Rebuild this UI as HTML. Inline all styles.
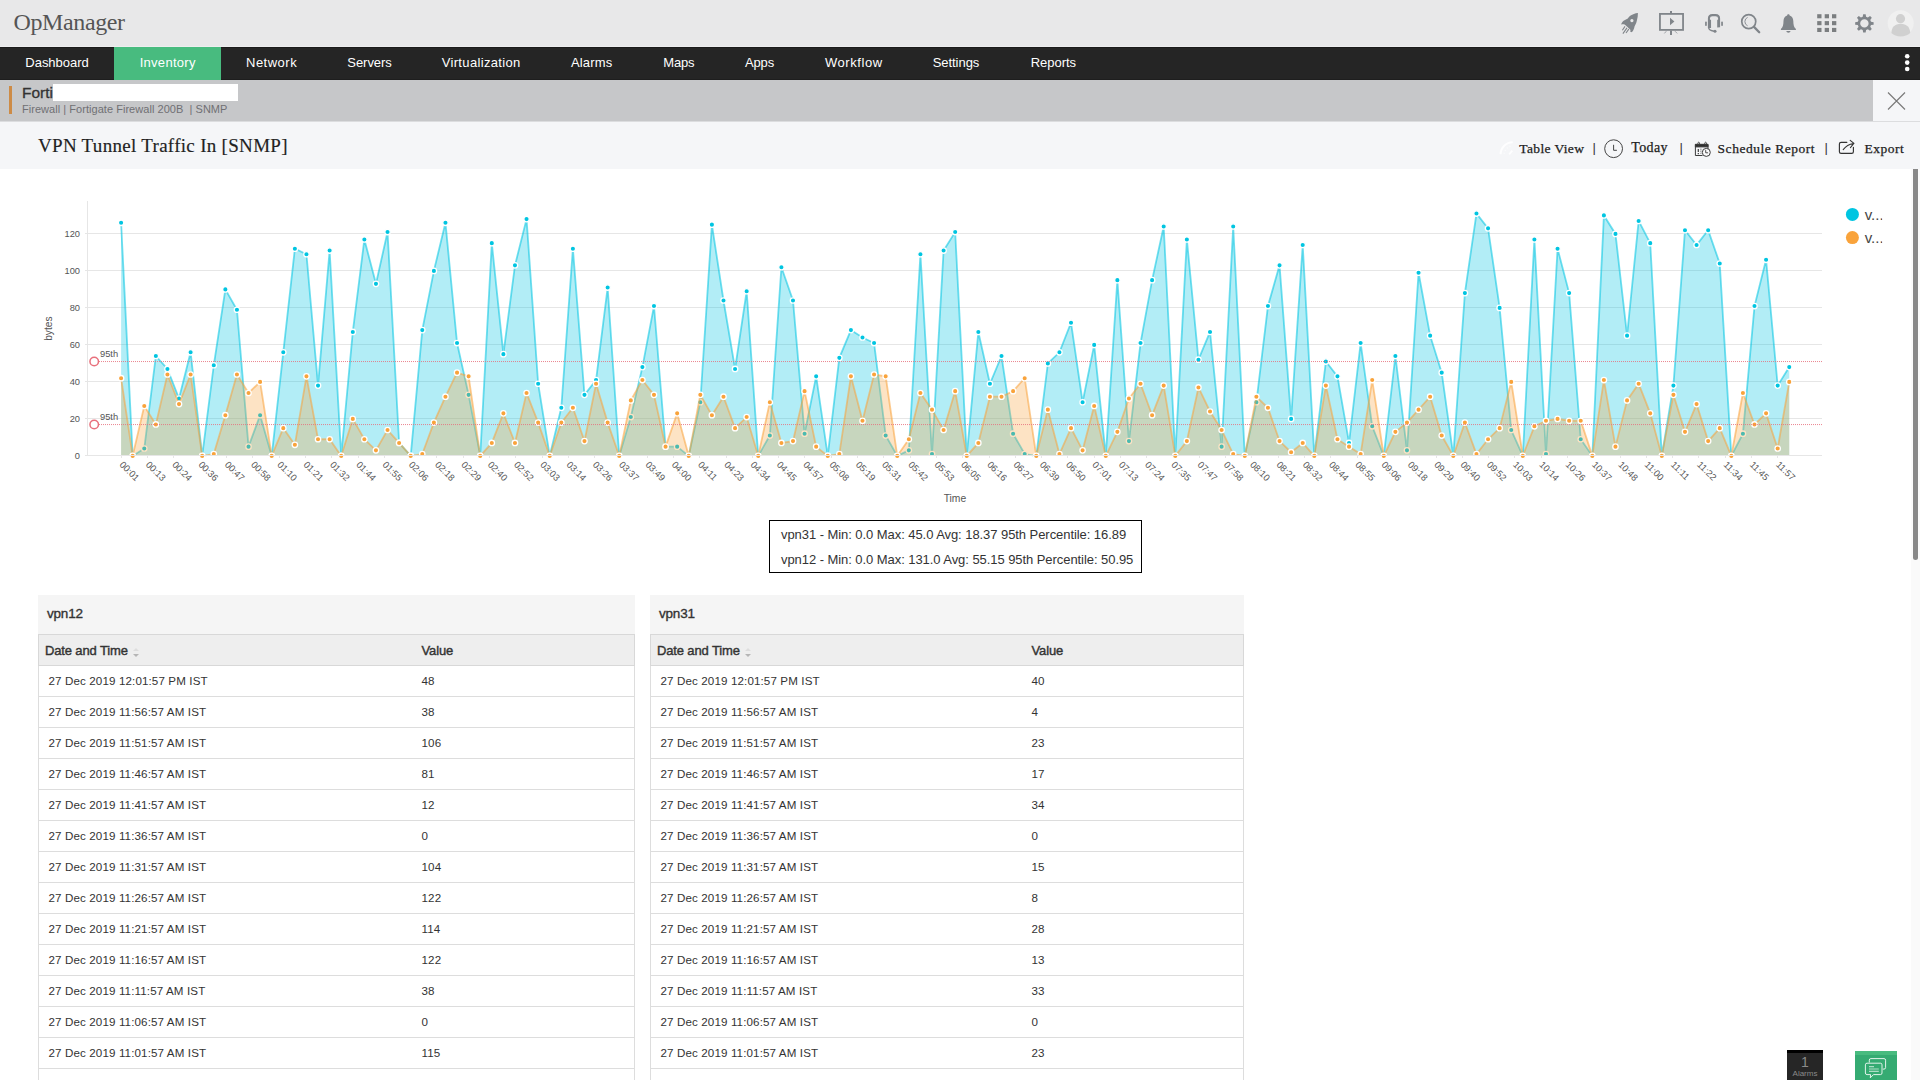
<!DOCTYPE html>
<html><head><meta charset="utf-8"><title>OpManager</title>
<style>
*{box-sizing:border-box}
html,body{margin:0;padding:0}
body{width:1920px;height:1080px;overflow:hidden;position:relative;background:#fff;font-family:"Liberation Sans",sans-serif;color:#333}
#top{position:absolute;left:0;top:0;width:1920px;height:47px;background:#e8e8e9;border-bottom:1px solid #eeeeef}
#logo{position:absolute;left:13.5px;top:8px;font-family:"Liberation Serif",serif;font-size:24px;color:#555;letter-spacing:-0.38px;line-height:28px;white-space:nowrap}
#nav{position:absolute;left:0;top:47px;width:1920px;height:33px;background:#252525;box-shadow:inset 0 1px 0 #1b1b1b, inset 0 -1px 0 #1e1e1e}
#nav .act{position:absolute;left:114px;top:0;width:107px;height:33px;background:#48bb7f}
#nav span{position:absolute;top:0;line-height:31px;font-size:13px;color:#fff;white-space:nowrap}
#dev{position:absolute;left:0;top:80px;width:1920px;height:42px;background:#c6c7c9;border-bottom:1px solid #dcdddf}
#dev .bar{position:absolute;left:9px;top:6px;width:3px;height:28px;background:#cd8b46}
#dev .nm{position:absolute;left:22px;top:4px;font-size:15.5px;-webkit-text-stroke:0.3px #333;color:#333;line-height:18px}
#dev .red{position:absolute;left:53px;top:4px;width:185px;height:17px;background:#fff}
#dev .sub{position:absolute;left:22px;top:22.5px;font-size:11px;color:#707074;letter-spacing:0.04px;line-height:13px;white-space:pre}
#dev .close{position:absolute;left:1873px;top:0;width:47px;height:41px;background:#f5f6f8}
#title{position:absolute;left:0;top:122px;width:1920px;height:47px;background:#f5f6f8}
#title h1{position:absolute;left:38px;top:12px;-webkit-text-stroke:0.15px #222;margin:0;font-family:"Liberation Serif",serif;font-weight:normal;font-size:19px;line-height:24px;color:#222;white-space:nowrap;letter-spacing:0.3px}
#title .act{position:absolute;top:0;font-family:"Liberation Serif",serif;font-size:13.5px;line-height:18px;color:#222;white-space:nowrap;-webkit-text-stroke:0.25px #222}
#stats{position:absolute;left:769px;top:520px;width:373px;height:53px;border:1px solid #000;font-size:13px;color:#333;white-space:nowrap;letter-spacing:-0.062px}
#stats div{position:absolute;left:11px;line-height:16px}
.tbl{position:absolute;top:595px;height:500px}
.tt{height:39px;background:#f5f5f5;position:relative}
.tt span{position:absolute;left:9px;top:10.5px;font-size:13.5px;-webkit-text-stroke:0.35px #333;line-height:16px;color:#333;letter-spacing:-0.2px}
.th{height:32px;background:#eee;border:1px solid #d8d8d8;position:relative}
.th span{position:absolute;top:8px;font-size:13px;-webkit-text-stroke:0.4px #333;line-height:16px;color:#333;white-space:nowrap;letter-spacing:-0.14px}
.th .c1{left:6px}
.sort{position:absolute;left:94px;top:13px;width:7px;height:10px}
.sort:before{content:"";position:absolute;left:0;top:0;border:3.5px solid transparent;border-bottom:3.5px solid #ddd;border-top:0}
.sort:after{content:"";position:absolute;left:0;top:5.5px;border:3.5px solid transparent;border-top:3.5px solid #b5b5b5;border-bottom:0}
.tb{border-left:1px solid #ddd;border-right:1px solid #ddd}
.tr{height:31px;border-bottom:1px solid #ddd;position:relative}
.tr span{position:absolute;top:8px;font-size:11.6px;line-height:14px;color:#333;white-space:nowrap;letter-spacing:0.12px}
.tr .c1{left:9.5px}
</style></head><body>
<div id="top"><div id="logo">OpManager</div><svg width="320" height="47" viewBox="1600 0 320 47" style="position:absolute;left:1600px;top:0">
<g transform="translate(1620,12)" fill="#80858a"><path fill-rule="evenodd" d="M17.94,1 C15,1.3 12.5,2.3 10.6,3.6 C9.5,4.4 8.6,5.4 7.8,6.4 L3.6,8.7 C2.4,9.7 1.5,11 1.1,12.4 C2.4,12.1 3.6,12.1 4.6,12.4 L6.4,13.9 L10.6,18 L10.1,19.6 L11.6,20.3 C12.5,19.6 13.1,18.9 13.4,18 C14,16.8 14.4,15.7 14.5,14.6 L15,13.6 C16,12 16.6,10.3 16.9,8.6 C17.6,6.1 17.94,3.5 17.94,1 Z M11.9,7 a1.6,1.6 0 1,0 0.01,0 Z"/><path d="M5,14.4L2.4,18.2M7,15.9L2.9,21.6M8.8,17.2L6,21" stroke="#80858a" stroke-width="1.1" fill="none"/></g>
<g transform="translate(1658,10)" fill="none" stroke="#80858a"><rect x="1.95" y="3.9" width="23.1" height="16" stroke-width="1.8"/><path d="M13,0.9V3.5M13,20.5V24.9" stroke-width="2"/><path d="M8.3,21.2L6.4,23.4M17,21.2L19.2,23.4" stroke-width="1" stroke-opacity="0.7"/><path d="M12,7.8V15.3L16.4,11.55Z" fill="#80858a" stroke="none"/></g>
<g transform="translate(1703,13)" fill="#80858a" stroke="none"><path d="M4.9,15V5.6Q4.9,1 9.4,1H12.6Q17.1,1 17.1,5.6V14.2L14.2,14.6V7.2L15.1,6.2V5.6Q15.1,3.3 12.6,3.3H9.4Q6.9,3.3 6.9,5.6V6.2L8.05,7.2V15Z"/><rect x="2.1" y="8.6" width="1.7" height="4.5" rx="0.8"/><rect x="18.2" y="8.6" width="1.7" height="4.5" rx="0.8"/><path d="M5.7,14.6C5.6,17 8,17.7 11,18.2" fill="none" stroke="#80858a" stroke-width="1.5"/><circle cx="12" cy="18.3" r="1.5"/></g>
<g fill="none" stroke="#80858a"><circle cx="1748.75" cy="21.6" r="7" stroke-width="1.7"/><path d="M1754,26.9L1759.2,32.2" stroke-width="2.3" stroke-linecap="round"/><path d="M1747.6,17.4A4.6,4.6 0 0,0 1747.6,25.8" stroke-width="0.9"/></g>
<g transform="translate(1780,13)" fill="#80858a"><path d="M8.4,1.2C9.3,1.2 9.8,1.8 9.6,2.5C12,3.1 13.2,5.2 13.3,8C13.4,11.5 13.8,14.2 15.9,16V17.1H0.9V16C3,14.2 3.4,11.5 3.5,8C3.6,5.2 4.8,3.1 7.2,2.5C7,1.8 7.5,1.2 8.4,1.2Z"/><path d="M6.3,18.1H10.5C10.3,19.2 9.5,19.8 8.4,19.8S6.5,19.2 6.3,18.1Z"/></g>
<g fill="#7b7e80"><rect x="1817.2" y="14.2" width="4.3" height="4.1"/><rect x="1824.7" y="14.2" width="4.3" height="4.1"/><rect x="1832.0" y="14.2" width="4.3" height="4.1"/><rect x="1817.2" y="21.1" width="4.3" height="4.1"/><rect x="1824.7" y="21.1" width="4.3" height="4.1"/><rect x="1832.0" y="21.1" width="4.3" height="4.1"/><rect x="1817.2" y="27.9" width="4.3" height="4.1"/><rect x="1824.7" y="27.9" width="4.3" height="4.1"/><rect x="1832.0" y="27.9" width="4.3" height="4.1"/></g>
<g transform="translate(1864.4,23.4)" fill="#80858a"><path fill-rule="evenodd" d="M-1.68,-6.59L-1.25,-9.22L1.25,-9.22L1.68,-6.59L3.47,-5.85L5.63,-7.40L7.40,-5.63L5.85,-3.47L6.59,-1.68L9.22,-1.25L9.22,1.25L6.59,1.68L5.85,3.47L7.40,5.63L5.63,7.40L3.47,5.85L1.68,6.59L1.25,9.22L-1.25,9.22L-1.68,6.59L-3.47,5.85L-5.63,7.40L-7.40,5.63L-5.85,3.47L-6.59,1.68L-9.22,1.25L-9.22,-1.25L-6.59,-1.68L-5.85,-3.47L-7.40,-5.63L-5.63,-7.40L-3.47,-5.85ZM4.20,0 a4.20,4.20 0 1,0 -8.40,0 a4.20,4.20 0 1,0 8.40,0Z"/></g>
<circle cx="1900.7" cy="23.3" r="13" fill="#f0f0f0"/><circle cx="1900.5" cy="18.7" r="4.6" fill="#d0d0d0"/><path d="M1891.4,33 C1891.4,27.5 1895,23.8 1900.7,23.8 S1910.2,27.5 1910.2,33 C1907.8,35.3 1904.5,36.4 1900.7,36.4 S1893.6,35.3 1891.4,33Z" fill="#d0d0d0"/>
</svg></div>
<div id="nav"><div class="act"></div><span style="left:25.3px;letter-spacing:-0.02px">Dashboard</span><span style="left:139.7px;letter-spacing:0.28px">Inventory</span><span style="left:246.0px;letter-spacing:0.50px">Network</span><span style="left:347.3px;letter-spacing:-0.05px">Servers</span><span style="left:441.7px;letter-spacing:0.34px">Virtualization</span><span style="left:571.0px;letter-spacing:0.14px">Alarms</span><span style="left:663.3px;letter-spacing:-0.20px">Maps</span><span style="left:745.0px;letter-spacing:-0.16px">Apps</span><span style="left:825.0px;letter-spacing:0.55px">Workflow</span><span style="left:932.7px;letter-spacing:-0.05px">Settings</span><span style="left:1030.7px;letter-spacing:-0.03px">Reports</span><svg width="20" height="33" style="position:absolute;left:1897px;top:0"><g fill="#fff"><circle cx="10.2" cy="9.2" r="2.3"/><circle cx="10.2" cy="15.6" r="2.3"/><circle cx="10.2" cy="22" r="2.3"/></g></svg></div>
<div id="dev"><div class="bar"></div><div class="nm">Forti</div><div class="red"></div><div class="sub">Firewall | Fortigate Firewall 200B  | SNMP</div><div class="close"><svg width="47" height="42"><path d="M15 12.5L32 29.5M32 12.5L15 29.5" stroke="#777" stroke-width="1.1" fill="none"/></svg></div></div>
<div id="title"><h1>VPN Tunnel Traffic In [SNMP]</h1><svg width="440" height="47" viewBox="1480 122 440 47" style="position:absolute;left:1480px;top:0">
<g fill="none" stroke="#fff" stroke-opacity="0.9"><path d="M1500.6,154.2A12.2,12.2 0 0,1 1512.7,142.2" stroke-width="2"/><path d="M1504.3,153.8A8.4,8.4 0 0,1 1512.6,145.9" stroke-width="1.6" stroke-dasharray="1.1,2" stroke-opacity="0.6"/><path d="M1509.2,154.4L1512.3,150.6" stroke-width="1.8"/></g>
<g fill="none" stroke="#444"><circle cx="1613.6" cy="148.7" r="8.9" stroke-width="1"/><path d="M1613.6,144.8V150.3H1616.9" stroke-width="1"/></g>
<g transform="translate(1694.5,141.5)" fill="none" stroke="#3c3c3c" stroke-width="1"><path d="M0.9,2.9H13.5V9M8,14H0.9V2.9"/><path d="M0.9,2.9H13.5V5.4H0.9Z" fill="#2e2e2e"/><ellipse cx="4.2" cy="2.4" rx="0.9" ry="1.7" stroke-width="0.9"/><ellipse cx="11.1" cy="2.4" rx="0.9" ry="1.7" stroke-width="0.9"/><path d="M3.8,7.6V10.6M3.8,11.6V12.8" stroke-width="1.2"/><path d="M6.4,7V13" stroke-width="1.1" stroke-opacity="0.55" stroke-dasharray="1.4,0.7"/><circle cx="11.8" cy="10.9" r="4" fill="#fbfbfc" stroke-width="1"/><path d="M11.2,8.6V11.3H13.6" stroke-width="0.9"/></g>
<g fill="none" stroke="#333" stroke-width="1.15" stroke-linecap="round"><path d="M1846.9,142.3H1841.1Q1839.4,142.3 1839.4,144V151.7Q1839.4,153.4 1841.1,153.4H1851.7Q1853.4,153.4 1853.4,151.7V147.3"/><path d="M1843.2,149.6C1845.5,146.5 1848,144.2 1853.4,143.4M1850.2,140.4L1853.9,143.4L1850.4,147.6" stroke-width="1.05"/></g>
</svg>
<span class="act" style="left:1519.3px;top:18px;letter-spacing:0.36px">Table View</span>
<span class="act" style="left:1592.5px;top:17px;font-family:'Liberation Sans',sans-serif;font-size:13px;-webkit-text-stroke:0;color:#333">|</span>
<span class="act" style="left:1631.2px;top:17px;font-size:14px;letter-spacing:0.4px">Today</span>
<span class="act" style="left:1679.5px;top:17px;font-family:'Liberation Sans',sans-serif;font-size:13px;-webkit-text-stroke:0;color:#333">|</span>
<span class="act" style="left:1717.6px;top:18px;letter-spacing:0.52px">Schedule Report</span>
<span class="act" style="left:1824.5px;top:17px;font-family:'Liberation Sans',sans-serif;font-size:13px;-webkit-text-stroke:0;color:#333">|</span>
<span class="act" style="left:1864.4px;top:18px;letter-spacing:0.52px">Export</span></div>
<svg id="chart" width="1900" height="345" viewBox="0 0 1900 345" style="position:absolute;left:0;top:169px" font-family="Liberation Sans, sans-serif" font-size="9.3"><g stroke="#e6e6e6" stroke-width="1" shape-rendering="crispEdges"><line x1="85" x2="1822" y1="286.5" y2="286.5"/><line x1="85" x2="1822" y1="249.5" y2="249.5"/><line x1="85" x2="1822" y1="212.5" y2="212.5"/><line x1="85" x2="1822" y1="175.5" y2="175.5"/><line x1="85" x2="1822" y1="138.5" y2="138.5"/><line x1="85" x2="1822" y1="101.5" y2="101.5"/><line x1="85" x2="1822" y1="64.5" y2="64.5"/><line x1="87.5" x2="87.5" y1="32" y2="286.5"/><line x1="121.5" x2="121.5" y1="286.5" y2="289.0"/><line x1="147.5" x2="147.5" y1="286.5" y2="289.0"/><line x1="173.5" x2="173.5" y1="286.5" y2="289.0"/><line x1="200.5" x2="200.5" y1="286.5" y2="289.0"/><line x1="226.5" x2="226.5" y1="286.5" y2="289.0"/><line x1="252.5" x2="252.5" y1="286.5" y2="289.0"/><line x1="279.5" x2="279.5" y1="286.5" y2="289.0"/><line x1="305.5" x2="305.5" y1="286.5" y2="289.0"/><line x1="331.5" x2="331.5" y1="286.5" y2="289.0"/><line x1="358.5" x2="358.5" y1="286.5" y2="289.0"/><line x1="384.5" x2="384.5" y1="286.5" y2="289.0"/><line x1="410.5" x2="410.5" y1="286.5" y2="289.0"/><line x1="436.5" x2="436.5" y1="286.5" y2="289.0"/><line x1="463.5" x2="463.5" y1="286.5" y2="289.0"/><line x1="489.5" x2="489.5" y1="286.5" y2="289.0"/><line x1="515.5" x2="515.5" y1="286.5" y2="289.0"/><line x1="542.5" x2="542.5" y1="286.5" y2="289.0"/><line x1="568.5" x2="568.5" y1="286.5" y2="289.0"/><line x1="594.5" x2="594.5" y1="286.5" y2="289.0"/><line x1="620.5" x2="620.5" y1="286.5" y2="289.0"/><line x1="647.5" x2="647.5" y1="286.5" y2="289.0"/><line x1="673.5" x2="673.5" y1="286.5" y2="289.0"/><line x1="699.5" x2="699.5" y1="286.5" y2="289.0"/><line x1="726.5" x2="726.5" y1="286.5" y2="289.0"/><line x1="752.5" x2="752.5" y1="286.5" y2="289.0"/><line x1="778.5" x2="778.5" y1="286.5" y2="289.0"/><line x1="804.5" x2="804.5" y1="286.5" y2="289.0"/><line x1="831.5" x2="831.5" y1="286.5" y2="289.0"/><line x1="857.5" x2="857.5" y1="286.5" y2="289.0"/><line x1="883.5" x2="883.5" y1="286.5" y2="289.0"/><line x1="910.5" x2="910.5" y1="286.5" y2="289.0"/><line x1="936.5" x2="936.5" y1="286.5" y2="289.0"/><line x1="962.5" x2="962.5" y1="286.5" y2="289.0"/><line x1="989.5" x2="989.5" y1="286.5" y2="289.0"/><line x1="1015.5" x2="1015.5" y1="286.5" y2="289.0"/><line x1="1041.5" x2="1041.5" y1="286.5" y2="289.0"/><line x1="1067.5" x2="1067.5" y1="286.5" y2="289.0"/><line x1="1094.5" x2="1094.5" y1="286.5" y2="289.0"/><line x1="1120.5" x2="1120.5" y1="286.5" y2="289.0"/><line x1="1146.5" x2="1146.5" y1="286.5" y2="289.0"/><line x1="1173.5" x2="1173.5" y1="286.5" y2="289.0"/><line x1="1199.5" x2="1199.5" y1="286.5" y2="289.0"/><line x1="1225.5" x2="1225.5" y1="286.5" y2="289.0"/><line x1="1251.5" x2="1251.5" y1="286.5" y2="289.0"/><line x1="1278.5" x2="1278.5" y1="286.5" y2="289.0"/><line x1="1304.5" x2="1304.5" y1="286.5" y2="289.0"/><line x1="1330.5" x2="1330.5" y1="286.5" y2="289.0"/><line x1="1357.5" x2="1357.5" y1="286.5" y2="289.0"/><line x1="1383.5" x2="1383.5" y1="286.5" y2="289.0"/><line x1="1409.5" x2="1409.5" y1="286.5" y2="289.0"/><line x1="1436.5" x2="1436.5" y1="286.5" y2="289.0"/><line x1="1462.5" x2="1462.5" y1="286.5" y2="289.0"/><line x1="1488.5" x2="1488.5" y1="286.5" y2="289.0"/><line x1="1514.5" x2="1514.5" y1="286.5" y2="289.0"/><line x1="1541.5" x2="1541.5" y1="286.5" y2="289.0"/><line x1="1567.5" x2="1567.5" y1="286.5" y2="289.0"/><line x1="1593.5" x2="1593.5" y1="286.5" y2="289.0"/><line x1="1620.5" x2="1620.5" y1="286.5" y2="289.0"/><line x1="1646.5" x2="1646.5" y1="286.5" y2="289.0"/><line x1="1672.5" x2="1672.5" y1="286.5" y2="289.0"/><line x1="1698.5" x2="1698.5" y1="286.5" y2="289.0"/><line x1="1725.5" x2="1725.5" y1="286.5" y2="289.0"/><line x1="1751.5" x2="1751.5" y1="286.5" y2="289.0"/><line x1="1777.5" x2="1777.5" y1="286.5" y2="289.0"/></g><g fill="#555" text-anchor="end"><text transform="translate(80,290.0) scale(1,1.06)">0</text><text transform="translate(80,253.0) scale(1,1.06)">20</text><text transform="translate(80,216.0) scale(1,1.06)">40</text><text transform="translate(80,179.0) scale(1,1.06)">60</text><text transform="translate(80,142.0) scale(1,1.06)">80</text><text transform="translate(80,105.0) scale(1,1.06)">100</text><text transform="translate(80,68.0) scale(1,1.06)">120</text></g><g class="s1"><path d="M121.10,53.80L132.68,286.90L144.27,279.50L155.85,187.00L167.44,199.95L179.02,229.55L190.61,183.30L202.19,286.90L213.78,196.25L225.36,120.40L236.94,140.75L248.53,277.65L260.11,246.20L271.70,286.90L283.28,183.30L294.87,79.70L306.45,85.25L318.03,216.60L329.62,81.55L341.20,286.90L352.79,162.95L364.37,70.45L375.96,114.85L387.54,63.05L399.12,273.95L410.71,286.90L422.29,161.10L433.88,101.90L445.46,53.80L457.05,174.05L468.63,225.85L480.22,286.90L491.80,74.15L503.38,185.15L514.97,96.35L526.55,50.10L538.14,214.75L549.72,286.90L561.31,238.80L572.89,79.70L584.48,225.85L596.06,211.05L607.64,118.55L619.23,286.90L630.81,248.05L642.40,198.10L653.98,137.05L665.57,277.65L677.15,277.65L688.73,286.90L700.32,233.25L711.90,55.65L723.49,131.50L735.07,199.95L746.66,122.25L758.24,286.90L769.83,266.55L781.41,98.20L792.99,131.50L804.58,264.70L816.16,207.35L827.75,286.90L839.33,188.85L850.92,161.10L862.50,168.50L874.08,174.05L885.67,266.55L897.25,286.90L908.84,281.35L920.42,85.25L932.01,285.05L943.59,81.55L955.18,63.05L966.76,286.90L978.34,162.95L989.93,214.75L1001.51,187.00L1013.10,264.70L1024.68,285.05L1036.27,286.90L1047.85,194.40L1059.43,183.30L1071.02,153.70L1082.60,233.25L1094.19,175.90L1105.77,286.90L1117.36,111.15L1128.94,272.10L1140.53,174.05L1152.11,111.15L1163.69,57.50L1175.28,286.90L1186.86,70.45L1198.45,190.70L1210.03,162.95L1221.62,277.65L1233.20,57.50L1244.78,286.90L1256.37,233.25L1267.95,137.05L1279.54,96.35L1291.12,249.90L1302.71,76.00L1314.29,286.90L1325.88,192.55L1337.46,207.35L1349.04,273.95L1360.63,174.05L1372.21,257.30L1383.80,286.90L1395.38,187.00L1406.97,281.35L1418.55,103.75L1430.13,166.65L1441.72,203.65L1453.30,286.90L1464.89,124.10L1476.47,44.55L1488.06,59.35L1499.64,138.90L1511.23,261.00L1522.81,286.90L1534.39,70.45L1545.98,285.05L1557.56,79.70L1569.15,124.10L1580.73,270.25L1592.32,286.90L1603.90,46.40L1615.48,64.90L1627.07,166.65L1638.65,51.95L1650.24,74.15L1661.82,286.90L1673.41,216.60L1684.99,61.20L1696.58,76.00L1708.16,61.20L1719.74,94.50L1731.33,286.90L1742.91,264.70L1754.50,137.05L1766.08,90.80L1777.67,216.60L1789.25,198.10" fill="none" stroke="#00c5e1" stroke-width="1.8" stroke-opacity="0.55" stroke-linejoin="miter"/><path d="M121.10,53.80L132.68,286.90L144.27,279.50L155.85,187.00L167.44,199.95L179.02,229.55L190.61,183.30L202.19,286.90L213.78,196.25L225.36,120.40L236.94,140.75L248.53,277.65L260.11,246.20L271.70,286.90L283.28,183.30L294.87,79.70L306.45,85.25L318.03,216.60L329.62,81.55L341.20,286.90L352.79,162.95L364.37,70.45L375.96,114.85L387.54,63.05L399.12,273.95L410.71,286.90L422.29,161.10L433.88,101.90L445.46,53.80L457.05,174.05L468.63,225.85L480.22,286.90L491.80,74.15L503.38,185.15L514.97,96.35L526.55,50.10L538.14,214.75L549.72,286.90L561.31,238.80L572.89,79.70L584.48,225.85L596.06,211.05L607.64,118.55L619.23,286.90L630.81,248.05L642.40,198.10L653.98,137.05L665.57,277.65L677.15,277.65L688.73,286.90L700.32,233.25L711.90,55.65L723.49,131.50L735.07,199.95L746.66,122.25L758.24,286.90L769.83,266.55L781.41,98.20L792.99,131.50L804.58,264.70L816.16,207.35L827.75,286.90L839.33,188.85L850.92,161.10L862.50,168.50L874.08,174.05L885.67,266.55L897.25,286.90L908.84,281.35L920.42,85.25L932.01,285.05L943.59,81.55L955.18,63.05L966.76,286.90L978.34,162.95L989.93,214.75L1001.51,187.00L1013.10,264.70L1024.68,285.05L1036.27,286.90L1047.85,194.40L1059.43,183.30L1071.02,153.70L1082.60,233.25L1094.19,175.90L1105.77,286.90L1117.36,111.15L1128.94,272.10L1140.53,174.05L1152.11,111.15L1163.69,57.50L1175.28,286.90L1186.86,70.45L1198.45,190.70L1210.03,162.95L1221.62,277.65L1233.20,57.50L1244.78,286.90L1256.37,233.25L1267.95,137.05L1279.54,96.35L1291.12,249.90L1302.71,76.00L1314.29,286.90L1325.88,192.55L1337.46,207.35L1349.04,273.95L1360.63,174.05L1372.21,257.30L1383.80,286.90L1395.38,187.00L1406.97,281.35L1418.55,103.75L1430.13,166.65L1441.72,203.65L1453.30,286.90L1464.89,124.10L1476.47,44.55L1488.06,59.35L1499.64,138.90L1511.23,261.00L1522.81,286.90L1534.39,70.45L1545.98,285.05L1557.56,79.70L1569.15,124.10L1580.73,270.25L1592.32,286.90L1603.90,46.40L1615.48,64.90L1627.07,166.65L1638.65,51.95L1650.24,74.15L1661.82,286.90L1673.41,216.60L1684.99,61.20L1696.58,76.00L1708.16,61.20L1719.74,94.50L1731.33,286.90L1742.91,264.70L1754.50,137.05L1766.08,90.80L1777.67,216.60L1789.25,198.10L1789.25,286.90L121.10,286.90Z" fill="#00c5e1" fill-opacity="0.3" stroke="none"/><g fill="#00c5e1" stroke="#fff" stroke-width="1.3"><circle cx="121.10" cy="53.80" r="2.7"/><circle cx="132.68" cy="286.90" r="2.7"/><circle cx="144.27" cy="279.50" r="2.7"/><circle cx="155.85" cy="187.00" r="2.7"/><circle cx="167.44" cy="199.95" r="2.7"/><circle cx="179.02" cy="229.55" r="2.7"/><circle cx="190.61" cy="183.30" r="2.7"/><circle cx="202.19" cy="286.90" r="2.7"/><circle cx="213.78" cy="196.25" r="2.7"/><circle cx="225.36" cy="120.40" r="2.7"/><circle cx="236.94" cy="140.75" r="2.7"/><circle cx="248.53" cy="277.65" r="2.7"/><circle cx="260.11" cy="246.20" r="2.7"/><circle cx="271.70" cy="286.90" r="2.7"/><circle cx="283.28" cy="183.30" r="2.7"/><circle cx="294.87" cy="79.70" r="2.7"/><circle cx="306.45" cy="85.25" r="2.7"/><circle cx="318.03" cy="216.60" r="2.7"/><circle cx="329.62" cy="81.55" r="2.7"/><circle cx="341.20" cy="286.90" r="2.7"/><circle cx="352.79" cy="162.95" r="2.7"/><circle cx="364.37" cy="70.45" r="2.7"/><circle cx="375.96" cy="114.85" r="2.7"/><circle cx="387.54" cy="63.05" r="2.7"/><circle cx="399.12" cy="273.95" r="2.7"/><circle cx="410.71" cy="286.90" r="2.7"/><circle cx="422.29" cy="161.10" r="2.7"/><circle cx="433.88" cy="101.90" r="2.7"/><circle cx="445.46" cy="53.80" r="2.7"/><circle cx="457.05" cy="174.05" r="2.7"/><circle cx="468.63" cy="225.85" r="2.7"/><circle cx="480.22" cy="286.90" r="2.7"/><circle cx="491.80" cy="74.15" r="2.7"/><circle cx="503.38" cy="185.15" r="2.7"/><circle cx="514.97" cy="96.35" r="2.7"/><circle cx="526.55" cy="50.10" r="2.7"/><circle cx="538.14" cy="214.75" r="2.7"/><circle cx="549.72" cy="286.90" r="2.7"/><circle cx="561.31" cy="238.80" r="2.7"/><circle cx="572.89" cy="79.70" r="2.7"/><circle cx="584.48" cy="225.85" r="2.7"/><circle cx="596.06" cy="211.05" r="2.7"/><circle cx="607.64" cy="118.55" r="2.7"/><circle cx="619.23" cy="286.90" r="2.7"/><circle cx="630.81" cy="248.05" r="2.7"/><circle cx="642.40" cy="198.10" r="2.7"/><circle cx="653.98" cy="137.05" r="2.7"/><circle cx="665.57" cy="277.65" r="2.7"/><circle cx="677.15" cy="277.65" r="2.7"/><circle cx="688.73" cy="286.90" r="2.7"/><circle cx="700.32" cy="233.25" r="2.7"/><circle cx="711.90" cy="55.65" r="2.7"/><circle cx="723.49" cy="131.50" r="2.7"/><circle cx="735.07" cy="199.95" r="2.7"/><circle cx="746.66" cy="122.25" r="2.7"/><circle cx="758.24" cy="286.90" r="2.7"/><circle cx="769.83" cy="266.55" r="2.7"/><circle cx="781.41" cy="98.20" r="2.7"/><circle cx="792.99" cy="131.50" r="2.7"/><circle cx="804.58" cy="264.70" r="2.7"/><circle cx="816.16" cy="207.35" r="2.7"/><circle cx="827.75" cy="286.90" r="2.7"/><circle cx="839.33" cy="188.85" r="2.7"/><circle cx="850.92" cy="161.10" r="2.7"/><circle cx="862.50" cy="168.50" r="2.7"/><circle cx="874.08" cy="174.05" r="2.7"/><circle cx="885.67" cy="266.55" r="2.7"/><circle cx="897.25" cy="286.90" r="2.7"/><circle cx="908.84" cy="281.35" r="2.7"/><circle cx="920.42" cy="85.25" r="2.7"/><circle cx="932.01" cy="285.05" r="2.7"/><circle cx="943.59" cy="81.55" r="2.7"/><circle cx="955.18" cy="63.05" r="2.7"/><circle cx="966.76" cy="286.90" r="2.7"/><circle cx="978.34" cy="162.95" r="2.7"/><circle cx="989.93" cy="214.75" r="2.7"/><circle cx="1001.51" cy="187.00" r="2.7"/><circle cx="1013.10" cy="264.70" r="2.7"/><circle cx="1024.68" cy="285.05" r="2.7"/><circle cx="1036.27" cy="286.90" r="2.7"/><circle cx="1047.85" cy="194.40" r="2.7"/><circle cx="1059.43" cy="183.30" r="2.7"/><circle cx="1071.02" cy="153.70" r="2.7"/><circle cx="1082.60" cy="233.25" r="2.7"/><circle cx="1094.19" cy="175.90" r="2.7"/><circle cx="1105.77" cy="286.90" r="2.7"/><circle cx="1117.36" cy="111.15" r="2.7"/><circle cx="1128.94" cy="272.10" r="2.7"/><circle cx="1140.53" cy="174.05" r="2.7"/><circle cx="1152.11" cy="111.15" r="2.7"/><circle cx="1163.69" cy="57.50" r="2.7"/><circle cx="1175.28" cy="286.90" r="2.7"/><circle cx="1186.86" cy="70.45" r="2.7"/><circle cx="1198.45" cy="190.70" r="2.7"/><circle cx="1210.03" cy="162.95" r="2.7"/><circle cx="1221.62" cy="277.65" r="2.7"/><circle cx="1233.20" cy="57.50" r="2.7"/><circle cx="1244.78" cy="286.90" r="2.7"/><circle cx="1256.37" cy="233.25" r="2.7"/><circle cx="1267.95" cy="137.05" r="2.7"/><circle cx="1279.54" cy="96.35" r="2.7"/><circle cx="1291.12" cy="249.90" r="2.7"/><circle cx="1302.71" cy="76.00" r="2.7"/><circle cx="1314.29" cy="286.90" r="2.7"/><circle cx="1325.88" cy="192.55" r="2.7"/><circle cx="1337.46" cy="207.35" r="2.7"/><circle cx="1349.04" cy="273.95" r="2.7"/><circle cx="1360.63" cy="174.05" r="2.7"/><circle cx="1372.21" cy="257.30" r="2.7"/><circle cx="1383.80" cy="286.90" r="2.7"/><circle cx="1395.38" cy="187.00" r="2.7"/><circle cx="1406.97" cy="281.35" r="2.7"/><circle cx="1418.55" cy="103.75" r="2.7"/><circle cx="1430.13" cy="166.65" r="2.7"/><circle cx="1441.72" cy="203.65" r="2.7"/><circle cx="1453.30" cy="286.90" r="2.7"/><circle cx="1464.89" cy="124.10" r="2.7"/><circle cx="1476.47" cy="44.55" r="2.7"/><circle cx="1488.06" cy="59.35" r="2.7"/><circle cx="1499.64" cy="138.90" r="2.7"/><circle cx="1511.23" cy="261.00" r="2.7"/><circle cx="1522.81" cy="286.90" r="2.7"/><circle cx="1534.39" cy="70.45" r="2.7"/><circle cx="1545.98" cy="285.05" r="2.7"/><circle cx="1557.56" cy="79.70" r="2.7"/><circle cx="1569.15" cy="124.10" r="2.7"/><circle cx="1580.73" cy="270.25" r="2.7"/><circle cx="1592.32" cy="286.90" r="2.7"/><circle cx="1603.90" cy="46.40" r="2.7"/><circle cx="1615.48" cy="64.90" r="2.7"/><circle cx="1627.07" cy="166.65" r="2.7"/><circle cx="1638.65" cy="51.95" r="2.7"/><circle cx="1650.24" cy="74.15" r="2.7"/><circle cx="1661.82" cy="286.90" r="2.7"/><circle cx="1673.41" cy="216.60" r="2.7"/><circle cx="1684.99" cy="61.20" r="2.7"/><circle cx="1696.58" cy="76.00" r="2.7"/><circle cx="1708.16" cy="61.20" r="2.7"/><circle cx="1719.74" cy="94.50" r="2.7"/><circle cx="1731.33" cy="286.90" r="2.7"/><circle cx="1742.91" cy="264.70" r="2.7"/><circle cx="1754.50" cy="137.05" r="2.7"/><circle cx="1766.08" cy="90.80" r="2.7"/><circle cx="1777.67" cy="216.60" r="2.7"/><circle cx="1789.25" cy="198.10" r="2.7"/></g></g><g class="s2"><path d="M121.10,209.20L132.68,286.90L144.27,236.95L155.85,255.45L167.44,205.50L179.02,235.10L190.61,205.50L202.19,286.90L213.78,285.05L225.36,246.20L236.94,205.50L248.53,224.00L260.11,212.90L271.70,286.90L283.28,259.15L294.87,275.80L306.45,207.35L318.03,270.25L329.62,270.25L341.20,286.90L352.79,249.90L364.37,270.25L375.96,281.35L387.54,261.00L399.12,273.95L410.71,286.90L422.29,285.05L433.88,253.60L445.46,227.70L457.05,203.65L468.63,207.35L480.22,286.90L491.80,273.95L503.38,244.35L514.97,273.95L526.55,224.00L538.14,253.60L549.72,286.90L561.31,253.60L572.89,238.80L584.48,272.10L596.06,214.75L607.64,253.60L619.23,286.90L630.81,231.40L642.40,211.05L653.98,225.85L665.57,277.65L677.15,244.35L688.73,286.90L700.32,225.85L711.90,246.20L723.49,227.70L735.07,259.15L746.66,248.05L758.24,286.90L769.83,233.25L781.41,273.95L792.99,272.10L804.58,222.15L816.16,277.65L827.75,286.90L839.33,285.05L850.92,207.35L862.50,251.75L874.08,205.50L885.67,207.35L897.25,286.90L908.84,270.25L920.42,224.00L932.01,240.65L943.59,261.00L955.18,222.15L966.76,286.90L978.34,273.95L989.93,227.70L1001.51,227.70L1013.10,222.15L1024.68,209.20L1036.27,286.90L1047.85,240.65L1059.43,285.05L1071.02,259.15L1082.60,281.35L1094.19,236.95L1105.77,286.90L1117.36,262.85L1128.94,229.55L1140.53,214.75L1152.11,246.20L1163.69,216.60L1175.28,286.90L1186.86,272.10L1198.45,218.45L1210.03,242.50L1221.62,261.00L1233.20,285.05L1244.78,286.90L1256.37,227.70L1267.95,238.80L1279.54,272.10L1291.12,283.20L1302.71,273.95L1314.29,286.90L1325.88,216.60L1337.46,270.25L1349.04,277.65L1360.63,285.05L1372.21,211.05L1383.80,286.90L1395.38,262.85L1406.97,253.60L1418.55,240.65L1430.13,227.70L1441.72,266.55L1453.30,286.90L1464.89,253.60L1476.47,285.05L1488.06,270.25L1499.64,259.15L1511.23,212.90L1522.81,286.90L1534.39,257.30L1545.98,251.75L1557.56,249.90L1569.15,251.75L1580.73,251.75L1592.32,286.90L1603.90,211.05L1615.48,277.65L1627.07,231.40L1638.65,214.75L1650.24,244.35L1661.82,286.90L1673.41,225.85L1684.99,262.85L1696.58,235.10L1708.16,272.10L1719.74,259.15L1731.33,286.90L1742.91,224.00L1754.50,255.45L1766.08,244.35L1777.67,279.50L1789.25,212.90" fill="none" stroke="#f9a33b" stroke-width="1.8" stroke-opacity="0.55" stroke-linejoin="miter"/><path d="M121.10,209.20L132.68,286.90L144.27,236.95L155.85,255.45L167.44,205.50L179.02,235.10L190.61,205.50L202.19,286.90L213.78,285.05L225.36,246.20L236.94,205.50L248.53,224.00L260.11,212.90L271.70,286.90L283.28,259.15L294.87,275.80L306.45,207.35L318.03,270.25L329.62,270.25L341.20,286.90L352.79,249.90L364.37,270.25L375.96,281.35L387.54,261.00L399.12,273.95L410.71,286.90L422.29,285.05L433.88,253.60L445.46,227.70L457.05,203.65L468.63,207.35L480.22,286.90L491.80,273.95L503.38,244.35L514.97,273.95L526.55,224.00L538.14,253.60L549.72,286.90L561.31,253.60L572.89,238.80L584.48,272.10L596.06,214.75L607.64,253.60L619.23,286.90L630.81,231.40L642.40,211.05L653.98,225.85L665.57,277.65L677.15,244.35L688.73,286.90L700.32,225.85L711.90,246.20L723.49,227.70L735.07,259.15L746.66,248.05L758.24,286.90L769.83,233.25L781.41,273.95L792.99,272.10L804.58,222.15L816.16,277.65L827.75,286.90L839.33,285.05L850.92,207.35L862.50,251.75L874.08,205.50L885.67,207.35L897.25,286.90L908.84,270.25L920.42,224.00L932.01,240.65L943.59,261.00L955.18,222.15L966.76,286.90L978.34,273.95L989.93,227.70L1001.51,227.70L1013.10,222.15L1024.68,209.20L1036.27,286.90L1047.85,240.65L1059.43,285.05L1071.02,259.15L1082.60,281.35L1094.19,236.95L1105.77,286.90L1117.36,262.85L1128.94,229.55L1140.53,214.75L1152.11,246.20L1163.69,216.60L1175.28,286.90L1186.86,272.10L1198.45,218.45L1210.03,242.50L1221.62,261.00L1233.20,285.05L1244.78,286.90L1256.37,227.70L1267.95,238.80L1279.54,272.10L1291.12,283.20L1302.71,273.95L1314.29,286.90L1325.88,216.60L1337.46,270.25L1349.04,277.65L1360.63,285.05L1372.21,211.05L1383.80,286.90L1395.38,262.85L1406.97,253.60L1418.55,240.65L1430.13,227.70L1441.72,266.55L1453.30,286.90L1464.89,253.60L1476.47,285.05L1488.06,270.25L1499.64,259.15L1511.23,212.90L1522.81,286.90L1534.39,257.30L1545.98,251.75L1557.56,249.90L1569.15,251.75L1580.73,251.75L1592.32,286.90L1603.90,211.05L1615.48,277.65L1627.07,231.40L1638.65,214.75L1650.24,244.35L1661.82,286.90L1673.41,225.85L1684.99,262.85L1696.58,235.10L1708.16,272.10L1719.74,259.15L1731.33,286.90L1742.91,224.00L1754.50,255.45L1766.08,244.35L1777.67,279.50L1789.25,212.90L1789.25,286.90L121.10,286.90Z" fill="#f9a33b" fill-opacity="0.3" stroke="none"/><g fill="#f9a33b" stroke="#fff" stroke-width="1.3"><circle cx="121.10" cy="209.20" r="2.7"/><circle cx="132.68" cy="286.90" r="2.7"/><circle cx="144.27" cy="236.95" r="2.7"/><circle cx="155.85" cy="255.45" r="2.7"/><circle cx="167.44" cy="205.50" r="2.7"/><circle cx="179.02" cy="235.10" r="2.7"/><circle cx="190.61" cy="205.50" r="2.7"/><circle cx="202.19" cy="286.90" r="2.7"/><circle cx="213.78" cy="285.05" r="2.7"/><circle cx="225.36" cy="246.20" r="2.7"/><circle cx="236.94" cy="205.50" r="2.7"/><circle cx="248.53" cy="224.00" r="2.7"/><circle cx="260.11" cy="212.90" r="2.7"/><circle cx="271.70" cy="286.90" r="2.7"/><circle cx="283.28" cy="259.15" r="2.7"/><circle cx="294.87" cy="275.80" r="2.7"/><circle cx="306.45" cy="207.35" r="2.7"/><circle cx="318.03" cy="270.25" r="2.7"/><circle cx="329.62" cy="270.25" r="2.7"/><circle cx="341.20" cy="286.90" r="2.7"/><circle cx="352.79" cy="249.90" r="2.7"/><circle cx="364.37" cy="270.25" r="2.7"/><circle cx="375.96" cy="281.35" r="2.7"/><circle cx="387.54" cy="261.00" r="2.7"/><circle cx="399.12" cy="273.95" r="2.7"/><circle cx="410.71" cy="286.90" r="2.7"/><circle cx="422.29" cy="285.05" r="2.7"/><circle cx="433.88" cy="253.60" r="2.7"/><circle cx="445.46" cy="227.70" r="2.7"/><circle cx="457.05" cy="203.65" r="2.7"/><circle cx="468.63" cy="207.35" r="2.7"/><circle cx="480.22" cy="286.90" r="2.7"/><circle cx="491.80" cy="273.95" r="2.7"/><circle cx="503.38" cy="244.35" r="2.7"/><circle cx="514.97" cy="273.95" r="2.7"/><circle cx="526.55" cy="224.00" r="2.7"/><circle cx="538.14" cy="253.60" r="2.7"/><circle cx="549.72" cy="286.90" r="2.7"/><circle cx="561.31" cy="253.60" r="2.7"/><circle cx="572.89" cy="238.80" r="2.7"/><circle cx="584.48" cy="272.10" r="2.7"/><circle cx="596.06" cy="214.75" r="2.7"/><circle cx="607.64" cy="253.60" r="2.7"/><circle cx="619.23" cy="286.90" r="2.7"/><circle cx="630.81" cy="231.40" r="2.7"/><circle cx="642.40" cy="211.05" r="2.7"/><circle cx="653.98" cy="225.85" r="2.7"/><circle cx="665.57" cy="277.65" r="2.7"/><circle cx="677.15" cy="244.35" r="2.7"/><circle cx="688.73" cy="286.90" r="2.7"/><circle cx="700.32" cy="225.85" r="2.7"/><circle cx="711.90" cy="246.20" r="2.7"/><circle cx="723.49" cy="227.70" r="2.7"/><circle cx="735.07" cy="259.15" r="2.7"/><circle cx="746.66" cy="248.05" r="2.7"/><circle cx="758.24" cy="286.90" r="2.7"/><circle cx="769.83" cy="233.25" r="2.7"/><circle cx="781.41" cy="273.95" r="2.7"/><circle cx="792.99" cy="272.10" r="2.7"/><circle cx="804.58" cy="222.15" r="2.7"/><circle cx="816.16" cy="277.65" r="2.7"/><circle cx="827.75" cy="286.90" r="2.7"/><circle cx="839.33" cy="285.05" r="2.7"/><circle cx="850.92" cy="207.35" r="2.7"/><circle cx="862.50" cy="251.75" r="2.7"/><circle cx="874.08" cy="205.50" r="2.7"/><circle cx="885.67" cy="207.35" r="2.7"/><circle cx="897.25" cy="286.90" r="2.7"/><circle cx="908.84" cy="270.25" r="2.7"/><circle cx="920.42" cy="224.00" r="2.7"/><circle cx="932.01" cy="240.65" r="2.7"/><circle cx="943.59" cy="261.00" r="2.7"/><circle cx="955.18" cy="222.15" r="2.7"/><circle cx="966.76" cy="286.90" r="2.7"/><circle cx="978.34" cy="273.95" r="2.7"/><circle cx="989.93" cy="227.70" r="2.7"/><circle cx="1001.51" cy="227.70" r="2.7"/><circle cx="1013.10" cy="222.15" r="2.7"/><circle cx="1024.68" cy="209.20" r="2.7"/><circle cx="1036.27" cy="286.90" r="2.7"/><circle cx="1047.85" cy="240.65" r="2.7"/><circle cx="1059.43" cy="285.05" r="2.7"/><circle cx="1071.02" cy="259.15" r="2.7"/><circle cx="1082.60" cy="281.35" r="2.7"/><circle cx="1094.19" cy="236.95" r="2.7"/><circle cx="1105.77" cy="286.90" r="2.7"/><circle cx="1117.36" cy="262.85" r="2.7"/><circle cx="1128.94" cy="229.55" r="2.7"/><circle cx="1140.53" cy="214.75" r="2.7"/><circle cx="1152.11" cy="246.20" r="2.7"/><circle cx="1163.69" cy="216.60" r="2.7"/><circle cx="1175.28" cy="286.90" r="2.7"/><circle cx="1186.86" cy="272.10" r="2.7"/><circle cx="1198.45" cy="218.45" r="2.7"/><circle cx="1210.03" cy="242.50" r="2.7"/><circle cx="1221.62" cy="261.00" r="2.7"/><circle cx="1233.20" cy="285.05" r="2.7"/><circle cx="1244.78" cy="286.90" r="2.7"/><circle cx="1256.37" cy="227.70" r="2.7"/><circle cx="1267.95" cy="238.80" r="2.7"/><circle cx="1279.54" cy="272.10" r="2.7"/><circle cx="1291.12" cy="283.20" r="2.7"/><circle cx="1302.71" cy="273.95" r="2.7"/><circle cx="1314.29" cy="286.90" r="2.7"/><circle cx="1325.88" cy="216.60" r="2.7"/><circle cx="1337.46" cy="270.25" r="2.7"/><circle cx="1349.04" cy="277.65" r="2.7"/><circle cx="1360.63" cy="285.05" r="2.7"/><circle cx="1372.21" cy="211.05" r="2.7"/><circle cx="1383.80" cy="286.90" r="2.7"/><circle cx="1395.38" cy="262.85" r="2.7"/><circle cx="1406.97" cy="253.60" r="2.7"/><circle cx="1418.55" cy="240.65" r="2.7"/><circle cx="1430.13" cy="227.70" r="2.7"/><circle cx="1441.72" cy="266.55" r="2.7"/><circle cx="1453.30" cy="286.90" r="2.7"/><circle cx="1464.89" cy="253.60" r="2.7"/><circle cx="1476.47" cy="285.05" r="2.7"/><circle cx="1488.06" cy="270.25" r="2.7"/><circle cx="1499.64" cy="259.15" r="2.7"/><circle cx="1511.23" cy="212.90" r="2.7"/><circle cx="1522.81" cy="286.90" r="2.7"/><circle cx="1534.39" cy="257.30" r="2.7"/><circle cx="1545.98" cy="251.75" r="2.7"/><circle cx="1557.56" cy="249.90" r="2.7"/><circle cx="1569.15" cy="251.75" r="2.7"/><circle cx="1580.73" cy="251.75" r="2.7"/><circle cx="1592.32" cy="286.90" r="2.7"/><circle cx="1603.90" cy="211.05" r="2.7"/><circle cx="1615.48" cy="277.65" r="2.7"/><circle cx="1627.07" cy="231.40" r="2.7"/><circle cx="1638.65" cy="214.75" r="2.7"/><circle cx="1650.24" cy="244.35" r="2.7"/><circle cx="1661.82" cy="286.90" r="2.7"/><circle cx="1673.41" cy="225.85" r="2.7"/><circle cx="1684.99" cy="262.85" r="2.7"/><circle cx="1696.58" cy="235.10" r="2.7"/><circle cx="1708.16" cy="272.10" r="2.7"/><circle cx="1719.74" cy="259.15" r="2.7"/><circle cx="1731.33" cy="286.90" r="2.7"/><circle cx="1742.91" cy="224.00" r="2.7"/><circle cx="1754.50" cy="255.45" r="2.7"/><circle cx="1766.08" cy="244.35" r="2.7"/><circle cx="1777.67" cy="279.50" r="2.7"/><circle cx="1789.25" cy="212.90" r="2.7"/></g></g><g stroke="#e6e6e6" stroke-width="1" shape-rendering="crispEdges"><line x1="85" x2="1822" y1="286.5" y2="286.5"/></g><line x1="99" x2="1822" y1="192.54" y2="192.54" stroke="#e8707c" stroke-opacity="0.85" stroke-width="1" stroke-dasharray="1,1"/><circle cx="94.2" cy="192.54" r="4.25" fill="#fff" stroke="#e8707c" stroke-width="1.5"/><text transform="translate(100,188.04) scale(1,1.03)" fill="#555">95th</text><line x1="99" x2="1822" y1="255.55" y2="255.55" stroke="#e8707c" stroke-opacity="0.85" stroke-width="1" stroke-dasharray="1,1"/><circle cx="94.2" cy="255.55" r="4.25" fill="#fff" stroke="#e8707c" stroke-width="1.5"/><text transform="translate(100,251.05) scale(1,1.03)" fill="#555">95th</text><g fill="#555"><text transform="translate(122.90,284.30) rotate(45)" x="5.66" y="11.1">00:01</text><text transform="translate(149.19,284.30) rotate(45)" x="5.66" y="11.1">00:13</text><text transform="translate(175.48,284.30) rotate(45)" x="5.66" y="11.1">00:24</text><text transform="translate(201.78,284.30) rotate(45)" x="5.66" y="11.1">00:36</text><text transform="translate(228.07,284.30) rotate(45)" x="5.66" y="11.1">00:47</text><text transform="translate(254.36,284.30) rotate(45)" x="5.66" y="11.1">00:58</text><text transform="translate(280.65,284.30) rotate(45)" x="5.66" y="11.1">01:10</text><text transform="translate(306.94,284.30) rotate(45)" x="5.66" y="11.1">01:21</text><text transform="translate(333.24,284.30) rotate(45)" x="5.66" y="11.1">01:32</text><text transform="translate(359.53,284.30) rotate(45)" x="5.66" y="11.1">01:44</text><text transform="translate(385.82,284.30) rotate(45)" x="5.66" y="11.1">01:55</text><text transform="translate(412.11,284.30) rotate(45)" x="5.66" y="11.1">02:06</text><text transform="translate(438.40,284.30) rotate(45)" x="5.66" y="11.1">02:18</text><text transform="translate(464.70,284.30) rotate(45)" x="5.66" y="11.1">02:29</text><text transform="translate(490.99,284.30) rotate(45)" x="5.66" y="11.1">02:40</text><text transform="translate(517.28,284.30) rotate(45)" x="5.66" y="11.1">02:52</text><text transform="translate(543.57,284.30) rotate(45)" x="5.66" y="11.1">03:03</text><text transform="translate(569.87,284.30) rotate(45)" x="5.66" y="11.1">03:14</text><text transform="translate(596.16,284.30) rotate(45)" x="5.66" y="11.1">03:26</text><text transform="translate(622.45,284.30) rotate(45)" x="5.66" y="11.1">03:37</text><text transform="translate(648.74,284.30) rotate(45)" x="5.66" y="11.1">03:49</text><text transform="translate(675.03,284.30) rotate(45)" x="5.66" y="11.1">04:00</text><text transform="translate(701.33,284.30) rotate(45)" x="5.66" y="11.1">04:11</text><text transform="translate(727.62,284.30) rotate(45)" x="5.66" y="11.1">04:23</text><text transform="translate(753.91,284.30) rotate(45)" x="5.66" y="11.1">04:34</text><text transform="translate(780.20,284.30) rotate(45)" x="5.66" y="11.1">04:45</text><text transform="translate(806.49,284.30) rotate(45)" x="5.66" y="11.1">04:57</text><text transform="translate(832.79,284.30) rotate(45)" x="5.66" y="11.1">05:08</text><text transform="translate(859.08,284.30) rotate(45)" x="5.66" y="11.1">05:19</text><text transform="translate(885.37,284.30) rotate(45)" x="5.66" y="11.1">05:31</text><text transform="translate(911.66,284.30) rotate(45)" x="5.66" y="11.1">05:42</text><text transform="translate(937.95,284.30) rotate(45)" x="5.66" y="11.1">05:53</text><text transform="translate(964.25,284.30) rotate(45)" x="5.66" y="11.1">06:05</text><text transform="translate(990.54,284.30) rotate(45)" x="5.66" y="11.1">06:16</text><text transform="translate(1016.83,284.30) rotate(45)" x="5.66" y="11.1">06:27</text><text transform="translate(1043.12,284.30) rotate(45)" x="5.66" y="11.1">06:39</text><text transform="translate(1069.41,284.30) rotate(45)" x="5.66" y="11.1">06:50</text><text transform="translate(1095.71,284.30) rotate(45)" x="5.66" y="11.1">07:01</text><text transform="translate(1122.00,284.30) rotate(45)" x="5.66" y="11.1">07:13</text><text transform="translate(1148.29,284.30) rotate(45)" x="5.66" y="11.1">07:24</text><text transform="translate(1174.58,284.30) rotate(45)" x="5.66" y="11.1">07:35</text><text transform="translate(1200.87,284.30) rotate(45)" x="5.66" y="11.1">07:47</text><text transform="translate(1227.17,284.30) rotate(45)" x="5.66" y="11.1">07:58</text><text transform="translate(1253.46,284.30) rotate(45)" x="5.66" y="11.1">08:10</text><text transform="translate(1279.75,284.30) rotate(45)" x="5.66" y="11.1">08:21</text><text transform="translate(1306.04,284.30) rotate(45)" x="5.66" y="11.1">08:32</text><text transform="translate(1332.33,284.30) rotate(45)" x="5.66" y="11.1">08:44</text><text transform="translate(1358.63,284.30) rotate(45)" x="5.66" y="11.1">08:55</text><text transform="translate(1384.92,284.30) rotate(45)" x="5.66" y="11.1">09:06</text><text transform="translate(1411.21,284.30) rotate(45)" x="5.66" y="11.1">09:18</text><text transform="translate(1437.50,284.30) rotate(45)" x="5.66" y="11.1">09:29</text><text transform="translate(1463.80,284.30) rotate(45)" x="5.66" y="11.1">09:40</text><text transform="translate(1490.09,284.30) rotate(45)" x="5.66" y="11.1">09:52</text><text transform="translate(1516.38,284.30) rotate(45)" x="5.66" y="11.1">10:03</text><text transform="translate(1542.67,284.30) rotate(45)" x="5.66" y="11.1">10:14</text><text transform="translate(1568.96,284.30) rotate(45)" x="5.66" y="11.1">10:26</text><text transform="translate(1595.26,284.30) rotate(45)" x="5.66" y="11.1">10:37</text><text transform="translate(1621.55,284.30) rotate(45)" x="5.66" y="11.1">10:48</text><text transform="translate(1647.84,284.30) rotate(45)" x="5.66" y="11.1">11:00</text><text transform="translate(1674.13,284.30) rotate(45)" x="5.66" y="11.1">11:11</text><text transform="translate(1700.42,284.30) rotate(45)" x="5.66" y="11.1">11:22</text><text transform="translate(1726.72,284.30) rotate(45)" x="5.66" y="11.1">11:34</text><text transform="translate(1753.01,284.30) rotate(45)" x="5.66" y="11.1">11:45</text><text transform="translate(1779.30,284.30) rotate(45)" x="5.66" y="11.1">11:57</text></g><text x="954.9" y="333.0" fill="#555" font-size="10.3" text-anchor="middle">Time</text><text transform="translate(51.5,159.7) rotate(-90)" fill="#555" font-size="10.2" text-anchor="middle">bytes</text><circle cx="1852.4" cy="45.4" r="6.5" fill="#00c5e1"/><circle cx="1852.4" cy="68.6" r="6.5" fill="#f9a33b"/><clipPath id="lc"><rect x="1860" y="30" width="22.2" height="60"/></clipPath><g clip-path="url(#lc)"><text x="1864.7" y="50.9" font-size="15" fill="#444">v...</text><text x="1864.7" y="74.1" font-size="15" fill="#444">v...</text></g></svg>
<div id="stats"><div style="top:6px">vpn31 - Min: 0.0 Max: 45.0 Avg: 18.37 95th Percentile: 16.89</div><div style="top:31px">vpn12 - Min: 0.0 Max: 131.0 Avg: 55.15 95th Percentile: 50.95</div></div>
<div class="tbl" style="left:38px;width:597px"><div class="tt"><span>vpn12</span></div><div class="th"><span class="c1">Date and Time</span><i class="sort"></i><span class="c2" style="left:382.5px">Value</span></div><div class="tb"><div class="tr"><span class="c1">27 Dec 2019 12:01:57 PM IST</span><span class="c2" style="left:382.5px">48</span></div><div class="tr"><span class="c1">27 Dec 2019 11:56:57 AM IST</span><span class="c2" style="left:382.5px">38</span></div><div class="tr"><span class="c1">27 Dec 2019 11:51:57 AM IST</span><span class="c2" style="left:382.5px">106</span></div><div class="tr"><span class="c1">27 Dec 2019 11:46:57 AM IST</span><span class="c2" style="left:382.5px">81</span></div><div class="tr"><span class="c1">27 Dec 2019 11:41:57 AM IST</span><span class="c2" style="left:382.5px">12</span></div><div class="tr"><span class="c1">27 Dec 2019 11:36:57 AM IST</span><span class="c2" style="left:382.5px">0</span></div><div class="tr"><span class="c1">27 Dec 2019 11:31:57 AM IST</span><span class="c2" style="left:382.5px">104</span></div><div class="tr"><span class="c1">27 Dec 2019 11:26:57 AM IST</span><span class="c2" style="left:382.5px">122</span></div><div class="tr"><span class="c1">27 Dec 2019 11:21:57 AM IST</span><span class="c2" style="left:382.5px">114</span></div><div class="tr"><span class="c1">27 Dec 2019 11:16:57 AM IST</span><span class="c2" style="left:382.5px">122</span></div><div class="tr"><span class="c1">27 Dec 2019 11:11:57 AM IST</span><span class="c2" style="left:382.5px">38</span></div><div class="tr"><span class="c1">27 Dec 2019 11:06:57 AM IST</span><span class="c2" style="left:382.5px">0</span></div><div class="tr"><span class="c1">27 Dec 2019 11:01:57 AM IST</span><span class="c2" style="left:382.5px">115</span></div><div class="tr"></div></div></div><div class="tbl" style="left:650px;width:594px"><div class="tt"><span>vpn31</span></div><div class="th"><span class="c1">Date and Time</span><i class="sort"></i><span class="c2" style="left:380.5px">Value</span></div><div class="tb"><div class="tr"><span class="c1">27 Dec 2019 12:01:57 PM IST</span><span class="c2" style="left:380.5px">40</span></div><div class="tr"><span class="c1">27 Dec 2019 11:56:57 AM IST</span><span class="c2" style="left:380.5px">4</span></div><div class="tr"><span class="c1">27 Dec 2019 11:51:57 AM IST</span><span class="c2" style="left:380.5px">23</span></div><div class="tr"><span class="c1">27 Dec 2019 11:46:57 AM IST</span><span class="c2" style="left:380.5px">17</span></div><div class="tr"><span class="c1">27 Dec 2019 11:41:57 AM IST</span><span class="c2" style="left:380.5px">34</span></div><div class="tr"><span class="c1">27 Dec 2019 11:36:57 AM IST</span><span class="c2" style="left:380.5px">0</span></div><div class="tr"><span class="c1">27 Dec 2019 11:31:57 AM IST</span><span class="c2" style="left:380.5px">15</span></div><div class="tr"><span class="c1">27 Dec 2019 11:26:57 AM IST</span><span class="c2" style="left:380.5px">8</span></div><div class="tr"><span class="c1">27 Dec 2019 11:21:57 AM IST</span><span class="c2" style="left:380.5px">28</span></div><div class="tr"><span class="c1">27 Dec 2019 11:16:57 AM IST</span><span class="c2" style="left:380.5px">13</span></div><div class="tr"><span class="c1">27 Dec 2019 11:11:57 AM IST</span><span class="c2" style="left:380.5px">33</span></div><div class="tr"><span class="c1">27 Dec 2019 11:06:57 AM IST</span><span class="c2" style="left:380.5px">0</span></div><div class="tr"><span class="c1">27 Dec 2019 11:01:57 AM IST</span><span class="c2" style="left:380.5px">23</span></div><div class="tr"></div></div></div>
<div style="position:absolute;left:1911px;top:169px;width:9px;height:911px;background:#fafafa"></div>
<div style="position:absolute;left:1913px;top:169px;width:5px;height:391px;background:#888;border-radius:0 0 2.5px 2.5px"></div>
<div style="position:absolute;left:1787px;top:1050px;width:36px;height:30px;background:#262626;border-top:3px solid #000;text-align:center;color:#8a8a8a"><div style="font-size:14px;line-height:14px;margin-top:2px">1</div><div style="font-size:8px;line-height:9px;margin-top:0px">Alarms</div></div>
<div style="position:absolute;left:1855px;top:1051px;width:42px;height:29px;background:#35ab72;border-top:4px solid #48bb7f"><svg width="42" height="29" viewBox="1855 1055 42 29" style="position:absolute;left:0;top:0"><g fill="none" stroke="#fff" stroke-opacity="0.85" stroke-width="1"><path d="M1869.3,1062.5V1060.2Q1869.3,1058.6 1870.9,1058.6H1884Q1885.6,1058.6 1885.6,1060.2V1067.5Q1885.6,1069.1 1884,1069.1H1882.8"/><path d="M1867,1063.2H1880.4Q1882,1063.2 1882,1064.8V1073Q1882,1074.6 1880.4,1074.6H1873.5L1870.3,1077.8L1870.6,1074.6H1867Q1865.4,1074.6 1865.4,1073V1064.8Q1865.4,1063.2 1867,1063.2Z"/><path d="M1869,1066.7H1874M1869,1069H1878.8M1869,1071.3H1878.8" stroke-width="1.2" stroke-opacity="0.6"/></g></svg></div>
</body></html>
